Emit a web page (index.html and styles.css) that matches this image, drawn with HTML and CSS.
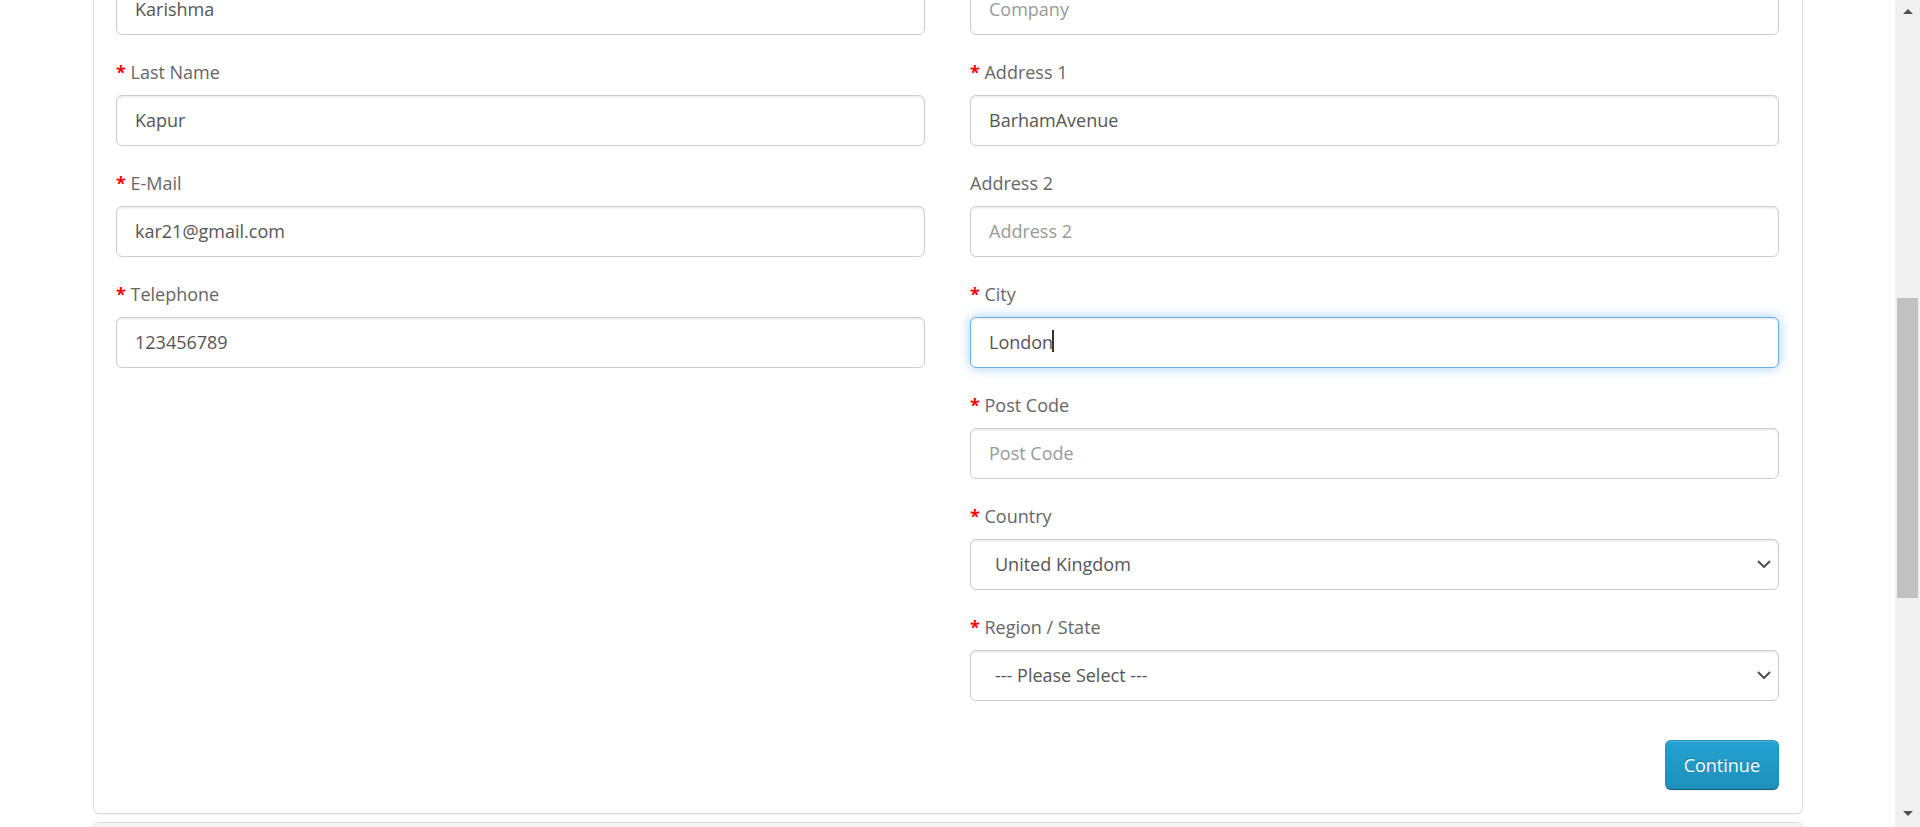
FILE: index.html
```html
<!DOCTYPE html>
<html lang="en">
<head>
<meta charset="utf-8">
<title>Checkout</title>
<link rel="stylesheet" href="styles.css">
</head>
<body>
<main class="viewport">
  <div class="container">
    <div class="panel">
      <div class="panel-body">
        <div class="form-row">
          <fieldset class="col">
            <div class="form-group required">
              <label class="control-label" for="f-first">First Name</label>
              <input class="form-control" id="f-first" type="text" value="Karishma" placeholder="First Name">
            </div>
            <div class="form-group required">
              <label class="control-label" for="f-last">Last Name</label>
              <input class="form-control" id="f-last" type="text" value="Kapur" placeholder="Last Name">
            </div>
            <div class="form-group required">
              <label class="control-label" for="f-email">E-Mail</label>
              <input class="form-control" id="f-email" type="text" value="kar21@gmail.com" placeholder="E-Mail">
            </div>
            <div class="form-group required">
              <label class="control-label" for="f-tel">Telephone</label>
              <input class="form-control" id="f-tel" type="text" value="123456789" placeholder="Telephone">
            </div>
          </fieldset>
          <fieldset class="col">
            <div class="form-group">
              <label class="control-label" for="f-company">Company</label>
              <input class="form-control" id="f-company" type="text" value="" placeholder="Company">
            </div>
            <div class="form-group required">
              <label class="control-label" for="f-addr1">Address 1</label>
              <input class="form-control" id="f-addr1" type="text" value="BarhamAvenue" placeholder="Address 1">
            </div>
            <div class="form-group">
              <label class="control-label" for="f-addr2">Address 2</label>
              <input class="form-control" id="f-addr2" type="text" value="" placeholder="Address 2">
            </div>
            <div class="form-group required">
              <label class="control-label" for="f-city">City</label>
              <div class="input-wrap">
                <input class="form-control is-focus" id="f-city" type="text" value="London" placeholder="City">
                <span class="caret-mark"></span>
              </div>
            </div>
            <div class="form-group required">
              <label class="control-label" for="f-post">Post Code</label>
              <input class="form-control" id="f-post" type="text" value="" placeholder="Post Code">
            </div>
            <div class="form-group required">
              <label class="control-label" for="f-country">Country</label>
              <select class="form-control select" id="f-country">
                <option>United Kingdom</option>
              </select>
            </div>
            <div class="form-group required">
              <label class="control-label" for="f-zone">Region / State</label>
              <select class="form-control select" id="f-zone">
                <option>--- Please Select ---</option>
              </select>
            </div>
          </fieldset>
        </div>
        <div class="buttons">
          <button class="btn-primary" type="button">Continue</button>
        </div>
      </div>
    </div>
    <div class="panel panel-next">
      <div class="panel-heading"></div>
    </div>
  </div>
</main>
<aside class="scrollbar">
  <div class="sb-btn sb-up"><span class="tri-up"></span></div>
  <div class="sb-thumb"></div>
  <div class="sb-fill"></div>
  <div class="sb-btn sb-down"><span class="tri-down"></span></div>
</aside>
</body>
</html>
```
FILE: styles.css
```css
html, body {
  margin: 0;
  height: 100%;
}

body {
  display: flex;
  overflow: hidden;
  background: #fff;
  font-family: "Open Sans", "Liberation Sans", sans-serif;
  font-size: 18px;
  line-height: 30px;
  color: #666;
}

.viewport {
  flex: 1;
  min-width: 0;
  height: 100vh;
  overflow: hidden;
}

.container {
  width: 1755px;
  box-sizing: border-box;
  padding: 0 22.5px;
  margin: -77.5px auto 0;
}

.panel {
  border: 1px solid #ddd;
  border-radius: 6px;
  background: #fff;
  box-shadow: 0 1px 1px rgba(0, 0, 0, 0.05);
}

.panel-next {
  margin-top: 7.5px;
  overflow: hidden;
}

.panel-heading {
  background: #f5f5f5;
  height: 60px;
}

.panel-body {
  padding: 22.5px 22.5px 23px;
}

.form-row {
  display: grid;
  grid-template-columns: 1fr 1fr;
  column-gap: 45px;
}

.col {
  margin: 0;
  padding: 0;
  border: 0;
  min-width: 0;
}

.form-group {
  margin-bottom: 22.5px;
}

.control-label {
  display: block;
  line-height: 30px;
  margin-bottom: 7.5px;
  font-weight: normal;
}

.required .control-label::before {
  content: "* ";
  color: #f00;
  font-weight: bold;
}

.form-control {
  display: block;
  box-sizing: border-box;
  width: 100%;
  height: 51px;
  margin: 0;
  padding: 9px 18px;
  font-family: "Open Sans", "Liberation Sans", sans-serif;
  font-size: 18px;
  line-height: 30px;
  color: #555;
  background: #fff;
  border: 1px solid #ccc;
  border-radius: 6px;
  box-shadow: inset 0 1.5px 1.5px rgba(0, 0, 0, 0.075);
  outline: none;
}

.form-control::placeholder {
  color: #999;
}

.form-control.is-focus {
  border-color: #66afe9;
  box-shadow: inset 0 1.5px 1.5px rgba(0, 0, 0, 0.075), 0 0 12px rgba(102, 175, 233, 0.6);
}

.input-wrap {
  position: relative;
}

.caret-mark {
  position: absolute;
  left: 82px;
  top: 13.5px;
  width: 2px;
  height: 22px;
  background: #333;
}

.select {
  appearance: none;
  -webkit-appearance: none;
  padding-left: 24px;
  padding-right: 40px;
  background-image: url("data:image/svg+xml,%3Csvg xmlns='http://www.w3.org/2000/svg' width='14' height='8' viewBox='0 0 14 8'%3E%3Cpath d='M1 1 L7 7 L13 1' fill='none' stroke='%23505050' stroke-width='2'/%3E%3C/svg%3E");
  background-repeat: no-repeat;
  background-position: right 7px center;
  background-size: 14px 8px;
}

.buttons {
  display: flex;
  justify-content: flex-end;
  margin-top: 17px;
}

.btn-primary {
  box-sizing: border-box;
  height: 50px;
  margin: 0;
  padding: 9px 18px;
  font-family: "Open Sans", "Liberation Sans", sans-serif;
  font-size: 18px;
  line-height: 30px;
  color: #fff;
  border: 1px solid;
  border-color: #1f90bb #1f90bb #145e7a;
  border-radius: 6px;
  background-color: #229ac8;
  background-image: linear-gradient(to bottom, #23a1d1, #1f90bb);
  text-shadow: 0 -1px 0 rgba(0, 0, 0, 0.25);
  box-shadow: inset 0 1px 0 rgba(255, 255, 255, 0.2), 0 1px 2px rgba(0, 0, 0, 0.05);
  cursor: pointer;
}

.scrollbar {
  width: 25px;
  flex: none;
  height: 100vh;
  background: #f0f0f0;
  display: flex;
  flex-direction: column;
  align-items: center;
}

.sb-btn {
  width: 25px;
  display: flex;
  align-items: center;
  justify-content: center;
}

.sb-up {
  height: 22px;
}

.sb-down {
  height: 28px;
}

.tri-up {
  width: 0;
  height: 0;
  border-left: 5.5px solid transparent;
  border-right: 5.5px solid transparent;
  border-bottom: 5px solid #505050;
}

.tri-down {
  width: 0;
  height: 0;
  border-left: 5.5px solid transparent;
  border-right: 5.5px solid transparent;
  border-top: 5px solid #505050;
}

.sb-thumb {
  margin-top: 276px;
  width: 21px;
  height: 300px;
  background: #c1c1c1;
}

.sb-fill {
  flex: 1;
}
```
